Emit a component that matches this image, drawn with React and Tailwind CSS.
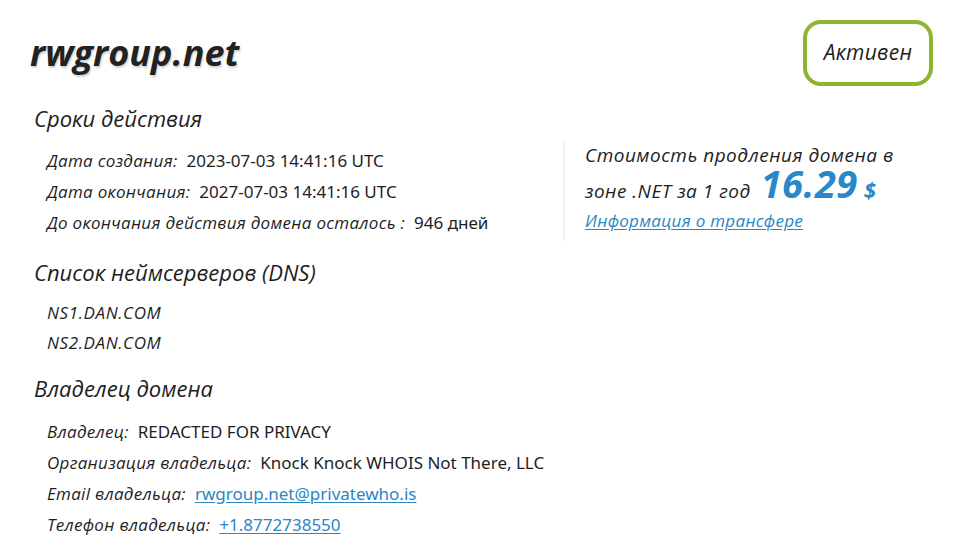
import React from 'react';

const label = "italic font-medium font-['Open_Sans',sans-serif] text-[#1e1e1e] tracking-[0.3px]";
const value = "font-['Noto_Sans',sans-serif] text-[#1e1e1e] text-[17px]";
const link = "font-['Noto_Sans',sans-serif] text-[17px] text-[#2a86c4] underline underline-offset-2";

const Row = ({ name, children }) => (
  <div className="h-[31px] flex items-center text-[17px]">
    <span className={label}>{name}:</span>
    <span className="ml-[9px]">{children}</span>
  </div>
);

const Heading = ({ children }) => (
  <h2 className={`${label} text-[22px] leading-[26px] pl-[4px] !tracking-[0px] !font-normal`}>{children}</h2>
);

const App = () => {
  const domain = {
    name: 'rwgroup.net',
    status: 'Активен',
    created: '2023-07-03 14:41:16 UTC',
    expires: '2027-07-03 14:41:16 UTC',
    daysLeft: '946 дней',
    ns: ['NS1.DAN.COM', 'NS2.DAN.COM'],
  };

  return (
    <div className="min-h-screen bg-white px-[30px] pt-[20px]">
      <div className="flex items-center justify-between pr-[2px]">
        <h1 className="italic font-bold font-['Open_Sans',sans-serif] text-[36px] text-[#222] [text-shadow:1px_2px_2px_rgba(0,0,0,0.18)]">
          {domain.name}
        </h1>
        <div className="w-[130px] h-[66px] rounded-[18px] border-4 border-[#8cb42e] flex items-center justify-center">
          <span className={`${label} text-[21px]`}>{domain.status}</span>
        </div>
      </div>

      <div className="mt-[19px]">
        <Heading>Сроки действия</Heading>
        <div className="flex mt-[14px]">
          <div className="w-[533px] pl-[17px]">
            <Row name="Дата создания"><span className={value}>{domain.created}</span></Row>
            <Row name="Дата окончания"><span className={value}>{domain.expires}</span></Row>
            <Row name="До окончания действия домена осталось "><span className={value}>{domain.daysLeft}</span></Row>
          </div>
          <div className="border-l-2 border-[#f2f2f2] pl-[20px] -mt-[4px] h-[100px]">
            <div className={`${label} text-[19px] leading-[28px] !tracking-[0.5px]`}>Стоимость продления домена в</div>
            <div className="flex items-baseline h-[38px] leading-none -mt-[5px]">
              <span className={`${label} text-[19px] !tracking-[0.5px]`}>зоне .NET за 1 год</span>
              <span className="ml-[10px] italic font-bold font-['Open_Sans',sans-serif] text-[38px] leading-none text-[#2a88c8] tracking-[0.5px]">16.29</span>
              <span className="ml-[6px] italic font-bold font-['Open_Sans',sans-serif] text-[22px] leading-none text-[#2a88c8]">$</span>
            </div>
            <a href="#" className={`${label} !text-[#2a86c4] underline underline-offset-2 text-[17px] leading-[30px] block mt-[4px]`}>Информация о трансфере</a>
          </div>
        </div>
      </div>

      <div className="mt-[18px]">
        <Heading>Список неймсерверов (DNS)</Heading>
        <div className="pl-[17px] mt-[13px]">
          {domain.ns.map(n => (
            <div key={n} className={`${label} text-[17px] !tracking-[0.6px] h-[30px] flex items-center`}>{n}</div>
          ))}
        </div>
      </div>

      <div className="mt-[17px]">
        <Heading>Владелец домена</Heading>
        <div className="pl-[17px] mt-[15px]">
          <Row name="Владелец"><span className={value}>REDACTED FOR PRIVACY</span></Row>
          <Row name="Организация владельца"><span className={value}>Knock Knock WHOIS Not There, LLC</span></Row>
          <Row name="Email владельца"><a href="#" className={link}>rwgroup.net@privatewho.is</a></Row>
          <Row name="Телефон владельца"><a href="#" className={link}>+1.8772738550</a></Row>
        </div>
      </div>
    </div>
  );
};

export default App;
